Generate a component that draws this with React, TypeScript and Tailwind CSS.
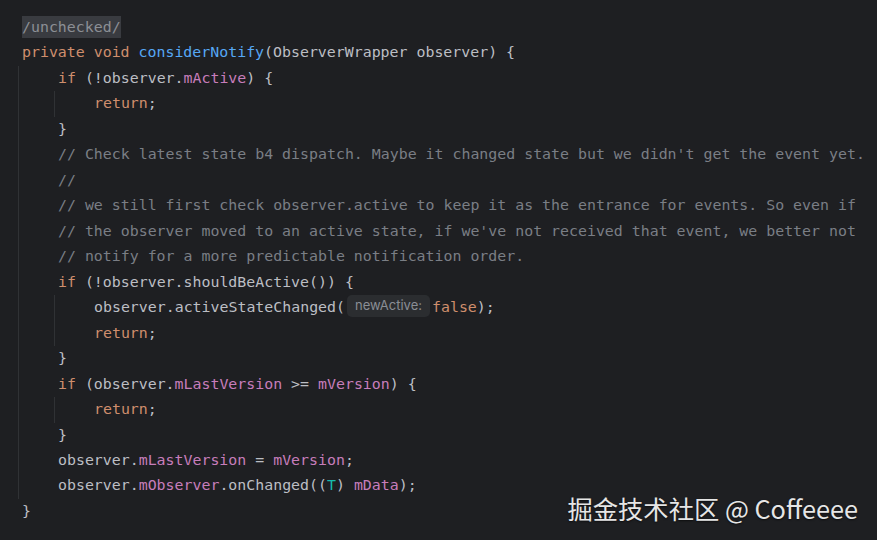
import React from "react";

type Tok = [string, string];

const K = "text-[#cf8e6d]";
const D = "text-[#bcbec4]";
const F = "text-[#c77dbb]";
const C = "text-[#7a7e85]";
const M = "text-[#56a8f5]";
const T = "text-[#16baac]";

const Line = ({ toks, children }: { toks?: Tok[]; children?: React.ReactNode }) => (
  <div className="h-[25.47px] leading-[25.47px] whitespace-pre">
    {toks?.map(([c, t], i) => (
      <span key={i} className={c}>
        {t}
      </span>
    ))}
    {children}
  </div>
);

const Block = ({ children }: { children: React.ReactNode }) => (
  <div className="ml-[-4px] pl-[39px] border-l border-[#303235]">{children}</div>
);

const App = () => {
  return (
    <div className="relative w-[877px] h-[540px] overflow-hidden bg-[#1e1f22] font-['DejaVu_Sans_Mono',monospace] text-[14.9px] text-[#bcbec4]">
      <div className="pt-[15px] pl-[22px]">
        <Line>
          <span className="bg-[#393b40] text-[#8c8f95] py-[2px]">/unchecked/</span>
        </Line>
        <Line
          toks={[
            [K, "private void "],
            [M, "considerNotify"],
            [D, "(ObserverWrapper observer) {"],
          ]}
        />
        <Block>
          <Line toks={[[K, "if "], [D, "(!observer."], [F, "mActive"], [D, ") {"]]} />
          <Block>
            <Line toks={[[K, "return"], [D, ";"]]} />
          </Block>
          <Line toks={[[D, "}"]]} />
          <Line toks={[[C, "// Check latest state b4 dispatch. Maybe it changed state but we didn't get the event yet."]]} />
          <Line toks={[[C, "//"]]} />
          <Line toks={[[C, "// we still first check observer.active to keep it as the entrance for events. So even if"]]} />
          <Line toks={[[C, "// the observer moved to an active state, if we've not received that event, we better not"]]} />
          <Line toks={[[C, "// notify for a more predictable notification order."]]} />
          <Line toks={[[K, "if "], [D, "(!observer.shouldBeActive()) {"]]} />
          <Block>
            <Line toks={[[D, "observer.activeStateChanged("]]}>
              <span className="inline-flex items-center h-[22px] align-middle mx-[2px] px-[8px] rounded-[5px] bg-[#2b2d30] font-['Inter',sans-serif] text-[13px] text-[#8a8e95] relative top-[-2px]">
                newActive:
              </span>
              <span className={K}>false</span>
              <span className={D}>);</span>
            </Line>
            <Line toks={[[K, "return"], [D, ";"]]} />
          </Block>
          <Line toks={[[D, "}"]]} />
          <Line
            toks={[
              [K, "if "],
              [D, "(observer."],
              [F, "mLastVersion"],
              [D, " >= "],
              [F, "mVersion"],
              [D, ") {"],
            ]}
          />
          <Block>
            <Line toks={[[K, "return"], [D, ";"]]} />
          </Block>
          <Line toks={[[D, "}"]]} />
          <Line toks={[[D, "observer."], [F, "mLastVersion"], [D, " = "], [F, "mVersion"], [D, ";"]]} />
          <Line
            toks={[
              [D, "observer."],
              [F, "mObserver"],
              [D, ".onChanged(("],
              [T, "T"],
              [D, ") "],
              [F, "mData"],
              [D, ");"],
            ]}
          />
        </Block>
        <Line toks={[[D, "}"]]} />
      </div>
      <div className="absolute right-[19px] bottom-[19px] font-['Noto_Sans_CJK_SC',sans-serif] text-[25.3px] leading-none text-[#e6e6e6] [text-shadow:0_1px_2px_rgba(0,0,0,0.6)]">
        掘金技术社区 @ Coffeeee
      </div>
    </div>
  );
};

export default App;
